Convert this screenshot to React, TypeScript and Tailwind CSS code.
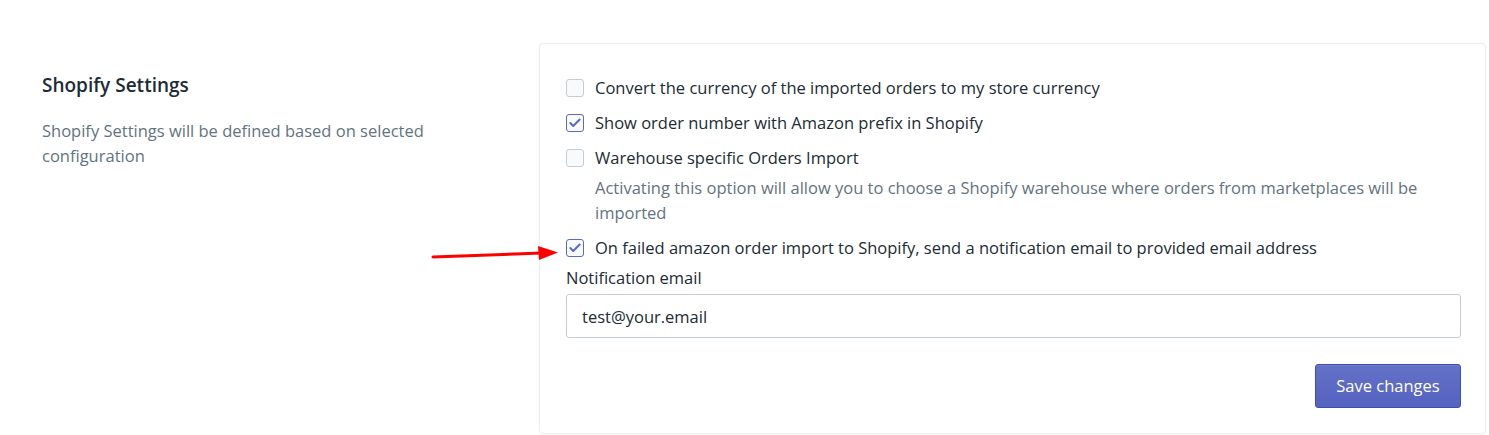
import { Check } from 'lucide-react';

const options = [
  { label: 'Convert the currency of the imported orders to my store currency', checked: false },
  { label: 'Show order number with Amazon prefix in Shopify', checked: true },
  {
    label: 'Warehouse specific Orders Import',
    checked: false,
    help: 'Activating this option will allow you to choose a Shopify warehouse where orders from marketplaces will be imported',
  },
  {
    label: 'On failed amazon order import to Shopify, send a notification email to provided email address',
    checked: true,
  },
];

function Checkbox({ checked }: { checked: boolean }) {
  return (
    <span
      className={`flex h-[18px] w-[18px] shrink-0 items-center justify-center rounded-[3px] border bg-[#f9fafb] ${
        checked ? 'border-[#5c6ac4]' : 'border-[#c4cdd5]'
      }`}
    >
      {checked && <Check size={14} strokeWidth={3.5} className="text-[#5c6ac4]" />}
    </span>
  );
}

export default function App() {
  return (
    <div className="relative min-h-[435px] bg-white font-['Open_Sans',sans-serif] text-[#212b36]">
      <div className="flex pt-[43px] pl-[42px] pr-[3px]">
        {/* Section annotation */}
        <div className="w-[497px] shrink-0 pt-[28px] pr-[60px]">
          <h2 className="text-[19px] font-semibold leading-[28px]">Shopify Settings</h2>
          <p className="mt-[19px] text-[16.5px] leading-[25px] text-[#637381]">
            Shopify Settings will be defined based on selected configuration
          </p>
        </div>

        {/* Card */}
        <div className="flex-1 rounded-[4px] border border-[#ebedef] pl-[26px] pr-[24px] pt-[31px] pb-[25px] shadow-[0_0_2px_rgba(0,0,0,0.04)]">
          <div className="flex flex-col gap-[10px]">
            {options.map((opt, i) => (
              <div key={i}>
                <label className="flex items-center gap-[11px] text-[16.5px] leading-[25px]">
                  <Checkbox checked={opt.checked} />
                  <span>{opt.label}</span>
                </label>
                {opt.help && (
                  <p className="mt-[5px] pl-[29px] text-[16.5px] leading-[25px] text-[#637381]">{opt.help}</p>
                )}
              </div>
            ))}
          </div>

          <div className="mt-[5px]">
            <div className="text-[16.5px] leading-[25px]">Notification email</div>
            <input
              readOnly
              value="test@your.email"
              className="mt-[4px] h-[44px] w-full rounded-[3px] border border-[#c4cdd5] px-[15px] text-[16.5px] text-[#212b36] outline-none"
            />
          </div>

          <div className="mt-[26px] flex justify-end">
            <button className="h-[44px] w-[146px] rounded-[3px] border border-[#3f4eae] bg-gradient-to-b from-[#6371c7] to-[#5563c1] text-[16.5px] text-white shadow-[inset_0_1px_0_0_#6f7bcb]">
              Save changes
            </button>
          </div>
        </div>
      </div>

      {/* Annotation arrow */}
      <svg className="absolute left-[430px] top-[243px]" width="132" height="22" viewBox="0 0 132 22">
        <line x1="3" y1="14" x2="112" y2="10" stroke="#ff0000" strokeWidth="3" strokeLinecap="round" />
        <polygon points="108,3 128,9.5 109,17" fill="#ff0000" />
      </svg>
    </div>
  );
}
